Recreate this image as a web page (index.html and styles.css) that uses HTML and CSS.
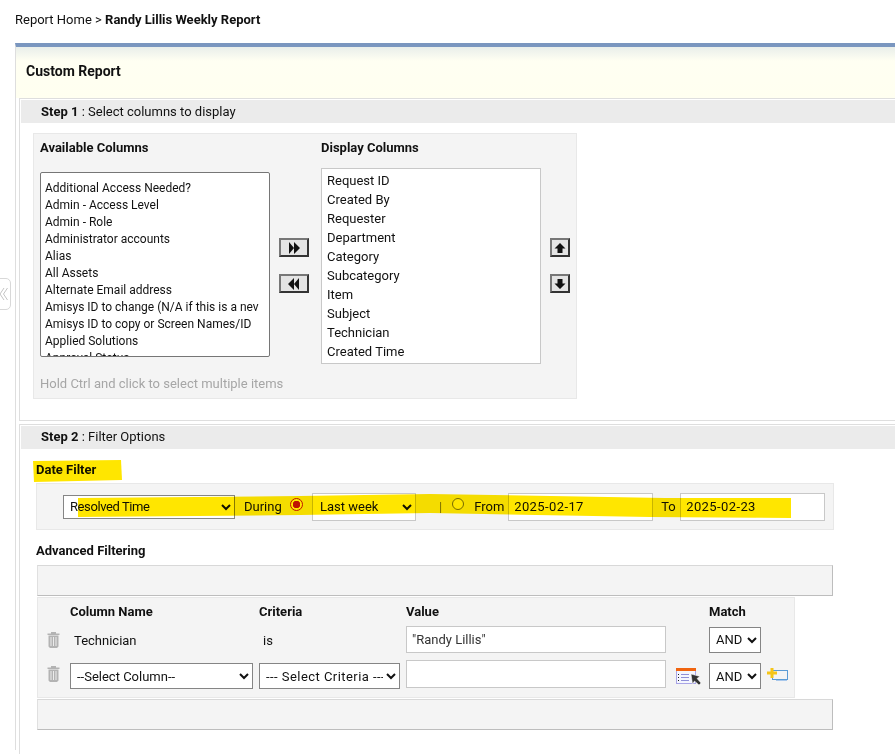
FILE: index.html
```html
<!DOCTYPE html>
<html lang="en">
<head>
<meta charset="utf-8">
<title>Randy Lillis Weekly Report</title>
<link rel="stylesheet" href="styles.css">
</head>
<body>
<div class="page">
  <div class="crumb">Report Home &gt; <b>Randy Lillis Weekly Report</b></div>
  <div class="panel">
    <div class="title">Custom Report</div>
    <section class="step step-one">
      <div class="step-head"><b>Step 1</b> : Select columns to display</div>
      <div class="columns-box">
        <div class="col-available">
          <div class="label">Available Columns</div>
          <div class="list list-available">
            <div>Additional Access Needed?</div>
            <div>Admin - Access Level</div>
            <div>Admin - Role</div>
            <div>Administrator accounts</div>
            <div>Alias</div>
            <div>All Assets</div>
            <div>Alternate Email address</div>
            <div>Amisys ID to change (N/A if this is a nev</div>
            <div>Amisys ID to copy or Screen Names/ID</div>
            <div>Applied Solutions</div>
            <div>Approval Status</div>
          </div>
          <div class="hint">Hold Ctrl and click to select multiple items</div>
        </div>
        <div class="move-buttons">
          <button class="btn btn-wide" type="button" aria-label="Add"><svg width="14" height="12" viewBox="0 0 14 12"><path d="M2 0l5 6-5 6zM7 0l6 6-6 6z" fill="#111"/></svg></button>
          <button class="btn btn-wide" type="button" aria-label="Remove"><svg width="14" height="12" viewBox="0 0 14 12"><path d="M12 0L7 6l5 6zM7 0L1 6l6 6z" fill="#111"/></svg></button>
        </div>
        <div class="col-display">
          <div class="label">Display Columns</div>
          <div class="list list-display">
            <div>Request ID</div>
            <div>Created By</div>
            <div>Requester</div>
            <div>Department</div>
            <div>Category</div>
            <div>Subcategory</div>
            <div>Item</div>
            <div>Subject</div>
            <div>Technician</div>
            <div>Created Time</div>
          </div>
        </div>
        <div class="order-buttons">
          <button class="btn btn-square" type="button" aria-label="Up"><svg width="12" height="12" viewBox="0 0 12 12"><path d="M6 1l5.500 5.500H8.500V11h-5V6.500H.5z" fill="#111"/></svg></button>
          <button class="btn btn-square" type="button" aria-label="Down"><svg width="12" height="12" viewBox="0 0 12 12"><path d="M6 11L.5 5.500h3V1h5v4.500h3z" fill="#111"/></svg></button>
        </div>
      </div>
    </section>
    <section class="step step-two">
      <div class="step-head step-head-two"><b>Step 2</b> : Filter Options</div>
      <div class="section-label date-label">Date Filter</div>
      <div class="date-box">
        <select class="sel sel-dark sel-field"><option>Resolved Time</option></select>
        <span class="date-during">During</span>
        <span class="radio radio-on"></span>
        <select class="sel sel-light sel-period"><option>Last week</option></select>
        <span class="pipe">|</span>
        <span class="radio"></span>
        <span class="date-from">From</span>
        <input class="field date-input" type="text" value="2025-02-17">
        <span class="date-to">To</span>
        <input class="field date-input" type="text" value="2025-02-23">
      </div>
      <div class="section-label adv-label">Advanced Filtering</div>
      <div class="bar"></div>
      <div class="criteria">
        <div class="row row-head">
          <span></span>
          <b>Column Name</b>
          <b>Criteria</b>
          <b>Value</b>
          <span></span>
          <b>Match</b>
          <span></span>
        </div>
        <div class="row row-one">
          <svg class="trash" width="13" height="16" viewBox="0 0 13 16"><path d="M4 1.500V0h5v1.500zM.5 1.500h12V3H.5zM1.500 3.500h10v11l-1.500 1.500H3l-1.500-1.500z" fill="#b3b3b3"/><path d="M4 5v9M6.500 5v9M9 5v9" stroke="#ececec" stroke-width="1"/></svg>
          <span class="cell-plain">Technician</span>
          <span class="cell-plain">is</span>
          <input class="field value-input" type="text" value="&quot;Randy Lillis&quot;">
          <span></span>
          <select class="sel sel-dark sel-match"><option>AND</option></select>
          <span></span>
        </div>
        <div class="row row-two">
          <svg class="trash" width="13" height="16" viewBox="0 0 13 16"><path d="M4 1.500V0h5v1.500zM.5 1.500h12V3H.5zM1.500 3.500h10v11l-1.500 1.500H3l-1.500-1.500z" fill="#b3b3b3"/><path d="M4 5v9M6.500 5v9M9 5v9" stroke="#ececec" stroke-width="1"/></svg>
          <select class="sel sel-dark sel-column sel-low"><option>--Select Column--</option></select>
          <select class="sel sel-dark sel-criteria sel-low"><option>--- Select Criteria ---</option></select>
          <input class="field value-input value-empty" type="text">
          <svg class="pick-icon" width="25" height="18" viewBox="0 0 25 18">
            <rect x=".5" y=".5" width="19" height="15" fill="#f4f6ff" stroke="#a9a5e6"/>
            <rect x="0" y="0" width="20" height="3" fill="#f0640f"/>
            <path d="M2 6.500h1M2 9.500h1M2 12.500h1" stroke="#222"/>
            <path d="M5 6.500h8M5 9.500h8M5 12.500h8" stroke="#8f8fd8"/>
            <path d="M15 6l9 2.500-3 2 4 4.500-2 2-4.500-4-2 3z" fill="#333" stroke="#fff" stroke-width=".5"/>
          </svg>
          <select class="sel sel-dark sel-match sel-low"><option>AND</option></select>
          <svg class="add-icon" width="21" height="14" viewBox="0 0 21 14">
            <rect x="5.500" y="3.500" width="15" height="9" fill="none" stroke="#5b9bd5"/>
            <path d="M9 13.500h11" stroke="#a8c8ec"/>
            <path d="M5 1v10M0 6h10" stroke="#f5c518" stroke-width="3"/>
          </svg>
        </div>
      </div>
      <div class="bar bar-bottom"></div>
    </section>
  </div>
  <svg class="marker" width="895" height="754" viewBox="0 0 895 754" aria-hidden="true">
    <path d="M33 461L121 460 122 480 34 482z" fill="#ffe600"/>
    <path d="M78 498L300 496 430 494 665 498 791 498 791 518 650 517 430 513 300 515 78 517z" fill="#ffe600"/>
  </svg>
  <div class="side-tab"><svg width="8" height="14" viewBox="0 0 8 14"><path d="M4 1L0 7l4 6M7.500 1l-4 6 4 6" fill="none" stroke="#c4c4c4" stroke-width="1"/></svg></div>
</div>
</body>
</html>
```
FILE: styles.css
```css
html, body {
  margin: 0;
  padding: 0;
  background: #fff;
  overflow: hidden;
}
.page {
  position: relative;
  width: 895px;
  height: 754px;
  overflow: hidden;
  font-family: Roboto, "Liberation Sans", sans-serif;
  font-size: 13px;
  line-height: 17px;
  color: #111;
}
b { font-weight: 700; }
.crumb {
  height: 43px;
  box-sizing: border-box;
  padding: 11px 0 0 15px;
}
.panel {
  margin-left: 15px;
  border-left: 1px solid #dedede;
  border-top: 4px solid #7a96bf;
  height: 707px;
  box-sizing: border-box;
}
.title {
  height: 51px;
  box-sizing: border-box;
  padding: 16px 0 0 10px;
  font-size: 14px;
  font-weight: 700;
  background: linear-gradient(#e9eeea 0, #fffff2 14px, #fffff0 100%);
}
.step {
  margin-left: 3px;
  border-left: 1px solid #dedede;
  border-top: 1px solid #dedede;
  padding: 1px 0 0 1px;
}
.step-one {
  height: 323px;
  box-sizing: border-box;
  border-bottom: 1px solid #dedede;
}
.step-two {
  margin-top: 3px;
  height: 340px;
}
.step-head {
  height: 23px;
  box-sizing: border-box;
  padding: 3px 0 0 20px;
  background: #ebebeb;
}
.step-head-two { padding-top: 2px; }
.columns-box {
  display: flex;
  width: 544px;
  height: 266px;
  box-sizing: border-box;
  margin: 10px 0 0 12px;
  background: #f4f4f4;
  border: 1px solid #e8e8e8;
}
.col-available {
  margin-left: 6px;
  width: 230px;
}
.label {
  font-weight: 700;
  margin-top: 5px;
}
.list {
  background: #fff;
  overflow: hidden;
  box-sizing: border-box;
  white-space: nowrap;
}
.list-available {
  width: 230px;
  height: 185px;
  margin-top: 16px;
  padding: 7px 9px 0 4px;
  border: 1px solid #767676;
  border-radius: 2px;
  font-size: 12px;
}
.list-display {
  width: 220px;
  height: 196px;
  margin-top: 12px;
  padding: 2px 5px 0;
  border: 1px solid #c8c8c8;
  line-height: 19px;
}
.hint {
  margin-top: 18px;
  color: #a6a6a6;
  white-space: nowrap;
}
.move-buttons, .order-buttons {
  display: flex;
  flex-direction: column;
  gap: 17px;
  padding-top: 104px;
}
.move-buttons {
  margin-left: 9px;
  width: 30px;
}
.col-display {
  margin-left: 12px;
  width: 220px;
}
.order-buttons {
  margin-left: 9px;
}
.btn {
  display: flex;
  align-items: center;
  justify-content: center;
  height: 19px;
  padding: 0;
  box-sizing: border-box;
  background: #e4e4e4;
  border: 2px solid;
  border-color: #777 #333 #333 #777;
}
.btn-wide { width: 30px; }
.btn-square { width: 20px; }
.section-label {
  font-weight: 700;
  margin-left: 15px;
}
.date-label { margin-top: 12px; }
.date-box {
  display: flex;
  align-items: center;
  width: 798px;
  height: 47px;
  box-sizing: border-box;
  margin: 5px 0 0 15px;
  padding-left: 26px;
  background: #f4f4f4;
  border: 1px solid #e8e8e8;
}
.sel {
  box-sizing: border-box;
  font: 13px/17px Roboto, "Liberation Sans", sans-serif;
  color: #111;
  background-color: #fff;
  border-radius: 0;
  padding-left: 2px;
}
.sel-dark { border: 1px solid #858585; }
.sel-light { border: 1px solid #c8c8c8; }
.sel-field { width: 172px; height: 24px; letter-spacing: -.4px; }
.sel-period { width: 104px; height: 28px; padding-left: 3px; }
.date-during { margin: 0 0 0 9px; width: 46px; }
.radio {
  width: 12px;
  height: 12px;
  box-sizing: border-box;
  border: 1px solid #767676;
  border-radius: 50%;
  background: #fff;
  margin-top: -6px;
}
.radio-on {
  width: 13px;
  height: 13px;
  border: 1px solid #c01500;
  background: radial-gradient(circle, #c01500 0 3.500px, #fff 4px);
  margin-top: -4px;
  margin-right: 9px;
}
.pipe { margin: 0 10px 0 23px; color: #777; }
.date-from { margin: 0 0 0 10px; width: 34px; }
.field {
  box-sizing: border-box;
  font: 13px/17px Roboto, "Liberation Sans", sans-serif;
  color: #111;
  background: #fff;
  border: 1px solid #c8c8c8;
  padding: 0 5px;
  border-radius: 0;
  outline: none;
}
.date-input { width: 145px; height: 28px; letter-spacing: .4px; }
.date-to { margin: 0 0 0 8px; width: 19px; }
.adv-label { margin-top: 12px; }
.bar {
  width: 796px;
  height: 31px;
  box-sizing: border-box;
  margin: 6px 0 0 16px;
  background: #f4f4f4;
  border: 1px solid #d0d0d0;
  border-left-color: #e0e0e0;
  border-top-color: #d8d8d8;
  border-right-color: #bdbdbd;
  border-bottom-color: #bdbdbd;
}
.bar-bottom { margin-top: 1px; }
.criteria {
  width: 758px;
  height: 101px;
  box-sizing: border-box;
  margin: 1px 0 0 16px;
  background: #f4f4f4;
  border: 1px solid #e8e8e8;
  padding-top: 5px;
}
.row {
  display: grid;
  grid-template-columns: 32px 189px 147px 260px 43px 52px 26px;
  align-items: center;
}
.row-head { height: 17px; }
.row-one { height: 27px; margin-top: 6px; }
.row-two { height: 28px; margin-top: 6px; }
.trash { margin-left: 9px; }
.cell-plain { margin: 2px 0 0 4px; }
.sel-column { width: 183px; height: 26px; }
.sel-criteria { width: 141px; height: 26px; letter-spacing: .45px; }
.sel-match { width: 52px; height: 26px; }
.sel-low { margin-top: 4px; }
.value-input { width: 260px; height: 27px; padding: 0 5px; color: #333; }
.value-empty { height: 28px; }
.pick-icon { margin: 6px 0 0 10px; }
.add-icon { margin: 0 0 0 6px; }
.marker {
  position: absolute;
  left: 0;
  top: 0;
  mix-blend-mode: multiply;
  pointer-events: none;
}
.side-tab {
  position: absolute;
  left: -1px;
  top: 278px;
  width: 10px;
  height: 30px;
  display: flex;
  align-items: center;
  background: #fff;
  border: 1px solid #d8d8d8;
  border-radius: 0 5px 5px 0;
}
```
